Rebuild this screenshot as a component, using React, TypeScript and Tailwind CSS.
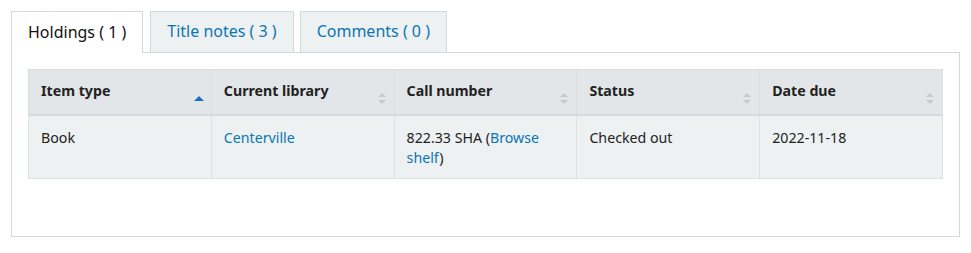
import React from 'react';

const SortIcon: React.FC<{ dir?: 'asc' | 'none' }> = ({ dir = 'none' }) => {
  if (dir === 'asc') {
    return (
      <svg width="10" height="6" viewBox="0 0 10 6" className="absolute right-[7px] bottom-[12px]">
        <path d="M5 0 L10 5 L0 5 Z" fill="#1a6fbf" />
      </svg>
    );
  }
  return (
    <svg width="8" height="11" viewBox="0 0 8 11" className="absolute right-[8px] bottom-[10px]">
      <path d="M4 0 L8 4 L0 4 Z" fill="#c4c9cc" />
      <path d="M4 11 L8 7 L0 7 Z" fill="#c4c9cc" />
    </svg>
  );
};

const headers = ['Item type', 'Current library', 'Call number', 'Status', 'Date due'];

const App: React.FC = () => {
  return (
    <div className="bg-white w-[971px] h-[253px] pt-[11px] px-[11px] font-['Noto_Sans',sans-serif] text-[#222]">
      <ul className="flex items-end">
        <li className="h-[42px] px-[16px] pb-[2px] flex items-center bg-white border border-b-0 border-[#d5d8da] text-[16px] text-[#111] relative z-10 -mb-px">
          Holdings ( 1 )
        </li>
        <li className="ml-[7px] h-[41px] px-[16px] pb-[2px] flex items-center bg-[#eef1f2] border border-b-0 border-[#d5d8da] text-[16px] text-[#0a76b2]">
          Title notes ( 3 )
        </li>
        <li className="ml-[6px] h-[41px] px-[16px] pb-[2px] flex items-center bg-[#eef1f2] border border-b-0 border-[#d5d8da] text-[16px] text-[#0a76b2]">
          Comments ( 0 )
        </li>
      </ul>
      <div className="border border-[#d5d8da] px-[16px] pt-[16px] h-[185px]">
        <table className="w-full table-fixed border-collapse text-[14.2px]">
          <thead>
            <tr className="bg-[#e2e6e8]">
              {headers.map((h, i) => (
                <th
                  key={h}
                  className="relative h-[45px] text-left font-bold align-top pt-[10px] px-[12px] border border-[#d9dee0] border-b-2 border-b-[#d4dadd] text-[#222]"
                >
                  {h}
                  <SortIcon dir={i === 0 ? 'asc' : 'none'} />
                </th>
              ))}
            </tr>
          </thead>
          <tbody>
            <tr className="bg-[#eef1f2] align-top">
              <td className="h-[64px] px-[12px] pt-[12px] border border-[#dde2e4] leading-[20px]">Book</td>
              <td className="px-[12px] pt-[12px] border border-[#dde2e4] leading-[20px]">
                <a className="text-[#0a76b2]" href="#">Centerville</a>
              </td>
              <td className="px-[12px] pt-[12px] border border-[#dde2e4] leading-[20px]">
                822.33 SHA (<a className="text-[#0a76b2]" href="#">Browse shelf</a>)
              </td>
              <td className="px-[12px] pt-[12px] border border-[#dde2e4] leading-[20px]">Checked out</td>
              <td className="px-[12px] pt-[12px] border border-[#dde2e4] leading-[20px]">2022-11-18</td>
            </tr>
          </tbody>
        </table>
      </div>
    </div>
  );
};

export default App;
